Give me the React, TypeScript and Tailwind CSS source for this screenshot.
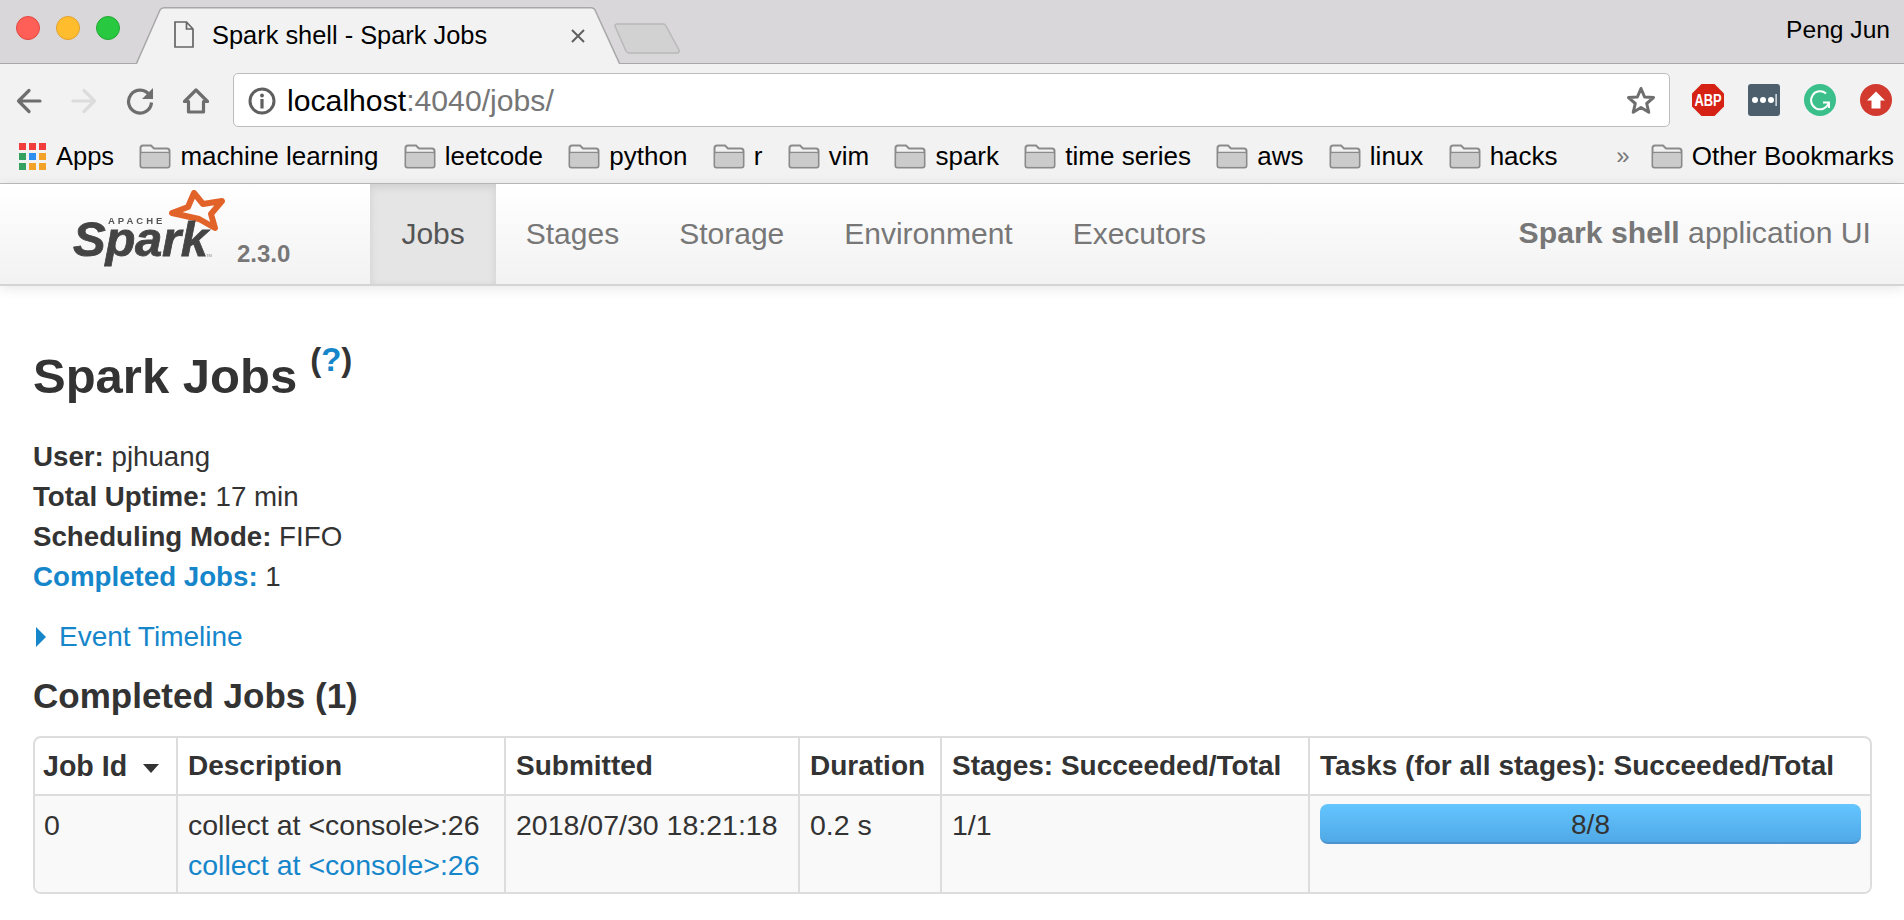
import React from "react"

const bookmarks = ["machine learning", "leetcode", "python", "r", "vim", "spark", "time series", "aws", "linux", "hacks"]

const navItems = ["Stages", "Storage", "Environment", "Executors"]

const headers = [
  "Description",
  "Submitted",
  "Duration",
  "Stages: Succeeded/Total",
  "Tasks (for all stages): Succeeded/Total",
]

function FolderIcon() {
  return (
    <svg width="32" height="25" viewBox="0 0 32 25" className="shrink-0">
      <path d="M1.5 4 Q1.5 1.5 4 1.5 H12 L15 4.5 H28 Q30.5 4.5 30.5 7 V21.5 Q30.5 23.5 28.5 23.5 H3.5 Q1.5 23.5 1.5 21.5 Z" fill="#f1f1f1" stroke="#8b8b8b" strokeWidth="2" />
      <path d="M2.5 9.5 H29.5 V22.5 H2.5 Z" fill="#cbcbcb" />
      <path d="M2 8.5 H30" stroke="#8b8b8b" strokeWidth="1.5" />
    </svg>
  )
}

function AppsIcon() {
  const colors = ["#f23d3d", "#f23d3d", "#f23d3d", "#34a15f", "#2f8ff0", "#f2a228", "#34a15f", "#f2a228", "#f2a228"]
  return (
    <svg width="27" height="27" viewBox="0 0 27 27" className="shrink-0">
      {colors.map((c, i) => (
        <rect key={i} x={(i % 3) * 10} y={Math.floor(i / 3) * 10} width="7" height="7" fill={c} />
      ))}
    </svg>
  )
}

function ArrowIcon({ flip, color }: { flip?: boolean; color: string }) {
  return (
    <svg width="26" height="26" viewBox="0 0 26 26" className={flip ? "shrink-0 rotate-180" : "shrink-0"}>
      <path d="M24 13 H2.5 M13 2.5 L2.5 13 L13 23.5" fill="none" stroke={color} strokeWidth="3.2" strokeLinecap="round" strokeLinejoin="round" />
    </svg>
  )
}

function SparkLogo() {
  return (
    <svg width="177" height="90" viewBox="0 0 177 90" className="shrink-0 blur-[0.6px]">
      <polygon points="134,9 143,20 162,17 151,30 155,44 139,35 112,29 128,23" fill="none" stroke="#e2632a" strokeWidth="6" strokeLinejoin="round" />
      <text x="48" y="40" fontFamily="Liberation Sans, sans-serif" fontWeight="700" fontSize="9.5" letterSpacing="3" fill="#555">APACHE</text>
      <text x="13" y="72" fontFamily="Liberation Sans, sans-serif" fontWeight="700" fontStyle="italic" fontSize="49" letterSpacing="-0.3" fill="#444" stroke="#444" strokeWidth="0.8">Spark</text>
      <text x="146" y="73" fontFamily="Liberation Sans, sans-serif" fontSize="4" fill="#888">TM</text>
    </svg>
  )
}

function BrowserChrome() {
  return (
    <div className="font-['Liberation_Sans',sans-serif] text-black">
      {/* tab strip */}
      <div className="flex h-[64px] items-start border-b-[1.5px] border-[#a8a8a8] bg-[#d9d7d9] pl-4">
        <div className="mt-4 flex gap-4">
          <div className="h-6 w-6 rounded-full border border-[#e2463f] bg-[#ff5f57]" />
          <div className="h-6 w-6 rounded-full border border-[#e1a02c] bg-[#ffbd2e]" />
          <div className="h-6 w-6 rounded-full border border-[#22a836] bg-[#28c940]" />
        </div>
        <div className="relative z-10 ml-4 mt-[7px] flex h-[57.5px] w-[484px] shrink-0 items-center">
          <svg width="484" height="58" viewBox="0 0 484 58" className="absolute inset-0">
            <path d="M0.5 57.5 L24 3 Q25.5 0.8 28 0.8 H455 Q458 0.8 459 3 L483.5 57.5 Z" fill="#f2f2f2" />
            <path d="M0.5 56.5 L24 3 Q25.5 0.8 28 0.8 H455 Q458 0.8 459 3 L483.5 56.5" fill="none" stroke="#a8a8a8" strokeWidth="1.5" />
          </svg>
          <svg width="20" height="27" viewBox="0 0 20 27" className="relative ml-[38px] mb-[2px] shrink-0">
            <path d="M1 1 H12.5 L19 8 V26 H1 Z M12.5 1 V8 H19" fill="none" stroke="#666" strokeWidth="1.7" />
          </svg>
          <span className="relative ml-[18px] whitespace-nowrap text-[25.4px] leading-none">Spark shell - Spark Jobs</span>
          <svg width="14" height="14" viewBox="0 0 14 14" className="relative ml-[84px] shrink-0">
            <path d="M1 1 L13 13 M13 1 L1 13" stroke="#5f5f5f" strokeWidth="2" />
          </svg>
        </div>
        <svg width="66" height="31" viewBox="0 0 66 31" className="-ml-[6px] mt-[23px] shrink-0">
          <path d="M1 3 Q1 1 3 1 H49 Q51 1 52 3 L65 27 Q65.5 30 63 30 H15 Q13 30 12 28 Z" fill="#d3d2d3" stroke="#b9b9b9" strokeWidth="1.5" />
        </svg>
        <span className="ml-auto mr-[14px] mt-[16px] text-[24.6px] leading-[28px]">Peng Jun</span>
      </div>

      {/* toolbar */}
      <div className="flex h-[72px] items-start bg-[#f2f2f2] pl-4 pr-3 pt-[9px]">
        <div className="mt-[15px] flex gap-[29px]">
          <ArrowIcon color="#6e6e6e" />
          <ArrowIcon flip color="#dcdcdc" />
          <svg width="28" height="28" viewBox="0 0 28 28" className="-mt-[1px] shrink-0">
            <path d="M23.5 8 A11.5 11.5 0 1 0 25.5 15.5" fill="none" stroke="#6e6e6e" strokeWidth="3.2" />
            <polygon points="27,1 27,12 16,12" fill="#6e6e6e" />
          </svg>
          <svg width="26" height="26" viewBox="0 0 26 26" className="shrink-0">
            <path d="M13 2 L24.5 13.5 H20.5 V24 H5.5 V13.5 H1.5 Z" fill="none" stroke="#6e6e6e" strokeWidth="3.2" strokeLinejoin="round" />
          </svg>
        </div>
        <div className="ml-[24px] flex h-[54px] flex-1 items-center rounded-[5px] border-[1.5px] border-[#bdbdbd] bg-white pl-[14px] pr-[13px]">
          <svg width="28" height="28" viewBox="0 0 28 28" className="mt-[1px] shrink-0">
            <circle cx="14" cy="14" r="12" fill="none" stroke="#5f5f5f" strokeWidth="3" />
            <circle cx="14" cy="8.5" r="1.9" fill="#5f5f5f" />
            <rect x="12.4" y="12" width="3.2" height="9.5" fill="#5f5f5f" />
          </svg>
          <span className="ml-[11px] pt-[3px] text-[30.2px] leading-none">
            localhost<span className="text-[#767676]">:4040/jobs/</span>
          </span>
          <svg width="30" height="29" viewBox="0 0 30 29" className="ml-auto shrink-0">
            <polygon points="15,2.5 18.6,11 27.5,11.6 20.7,17.5 22.8,26.3 15,21.5 7.2,26.3 9.3,17.5 2.5,11.6 11.4,11" fill="none" stroke="#6e6e6e" strokeWidth="3" strokeLinejoin="round" />
          </svg>
        </div>
        <div className="ml-[22px] mt-[11px] flex gap-6">
          <svg width="32" height="32" viewBox="0 0 32 32" className="shrink-0">
            <polygon points="9.5,0 22.5,0 32,9.5 32,22.5 22.5,32 9.5,32 0,22.5 0,9.5" fill="#d62115" />
            <text transform="translate(16 22) scale(0.76 1)" textAnchor="middle" fontFamily="Liberation Sans, sans-serif" fontWeight="700" fontSize="17" fill="#fff">ABP</text>
          </svg>
          <svg width="32" height="32" viewBox="0 0 32 32" className="shrink-0">
            <rect width="32" height="32" rx="3" fill="#4d5f6c" />
            <circle cx="7" cy="16" r="3" fill="#fff" />
            <circle cx="15" cy="16" r="3" fill="#fff" />
            <circle cx="23" cy="16" r="3" fill="#fff" />
            <rect x="27.5" y="10" width="1.2" height="12" fill="#fff" />
          </svg>
          <svg width="32" height="32" viewBox="0 0 32 32" className="shrink-0">
            <circle cx="16" cy="16" r="16" fill="#3bc08b" />
            <path d="M22 9.5 A9 9 0 1 0 24.5 19.5 M19 18.5 H25 V24" fill="none" stroke="#fff" strokeWidth="2" />
          </svg>
          <svg width="32" height="32" viewBox="0 0 32 32" className="shrink-0">
            <circle cx="16" cy="16" r="16" fill="#d2392f" />
            <polygon points="16,7.5 25,16.5 20.5,16.5 20.5,24.5 11.5,24.5 11.5,16.5 7,16.5" fill="#fff" />
          </svg>
        </div>
      </div>

      {/* bookmarks */}
      <div className="flex h-[48px] items-start justify-between border-b-[1.5px] border-[#bdbdbd] bg-[#f2f2f2] pl-[19px] pr-[10px] pt-[5px]">
        <div className="flex items-center gap-[25.3px]">
          <div className="flex items-center gap-[10px]">
            <AppsIcon />
            <span className="text-[25.5px] leading-[30px]">Apps</span>
          </div>
          {bookmarks.map((b) => (
            <div key={b} className="flex items-center gap-[9px]">
              <FolderIcon />
              <span className="whitespace-nowrap text-[26px] leading-[30px]">{b}</span>
            </div>
          ))}
        </div>
        <div className="flex items-center">
          <span className="mr-[21px] text-[24px] leading-[30px] text-[#777]">»</span>
          <div className="flex items-center gap-[9px]">
            <FolderIcon />
            <span className="whitespace-nowrap text-[26px] leading-[30px]">Other Bookmarks</span>
          </div>
        </div>
      </div>
    </div>
  )
}

function SparkNav() {
  return (
    <div className="relative flex h-[102px] items-stretch border-b-2 border-[#d4d4d4] bg-gradient-to-b from-white to-[#f2f2f2] shadow-[0_2px_12px_rgba(0,0,0,0.1)]">
      <div className="ml-[60px] flex items-start">
        <SparkLogo />
      </div>
      <span className="mt-[56px] self-start text-[24px] font-bold leading-[27px] text-[#777]">2.3.0</span>
      <div className="ml-[80px] flex items-center bg-[#e5e5e5] px-[31px] pb-[2px] text-[30px] text-[#555] shadow-[inset_0_3px_8px_rgba(0,0,0,0.1)]">
        Jobs
      </div>
      {navItems.map((n) => (
        <div key={n} className="flex items-center px-[30px] pb-[2px] text-[30px] text-[#777]">
          {n}
        </div>
      ))}
      <div className="ml-auto flex items-center pb-[2px] pr-[33px] text-[30.2px] text-[#777]">
        <span>
          <strong className="font-bold">Spark shell</strong> application UI
        </span>
      </div>
    </div>
  )
}

function JobsTable() {
  return (
    <div className="overflow-hidden rounded-lg border-2 border-[#ddd]">
      <table className="w-full table-fixed border-separate border-spacing-0 text-left text-[28px] leading-[40px]">
        <colgroup>
          <col className="w-[141px]" />
          <col className="w-[328px]" />
          <col className="w-[294px]" />
          <col className="w-[142px]" />
          <col className="w-[368px]" />
          <col className="w-[562px]" />
        </colgroup>
        <thead>
          <tr className="h-[58px]">
            <th className="border-b-2 border-[#ddd] px-[8px] font-bold">
              <span className="flex items-center gap-[16px]">
                <span className="text-[28.6px]">Job Id</span>
                <svg width="16" height="9" viewBox="0 0 16 9" className="mt-1 shrink-0">
                  <polygon points="0,0 16,0 8,9" fill="#333" />
                </svg>
              </span>
            </th>
            {headers.map((h) => (
              <th key={h} className="whitespace-nowrap border-b-2 border-l-2 border-[#ddd] px-[10px] font-bold">
                {h}
              </th>
            ))}
          </tr>
        </thead>
        <tbody>
          <tr className="h-[96px] bg-[#f9f9f9] align-top text-[28.5px]">
            <td className="px-[9px] pb-[7px] pt-[9px]">0</td>
            <td className="whitespace-nowrap border-l-2 border-[#ddd] px-[10px] pb-[7px] pt-[9px]">
              <div>{"collect at <console>:26"}</div>
              <a className="text-[#1686cb]">{"collect at <console>:26"}</a>
            </td>
            <td className="whitespace-nowrap border-l-2 border-[#ddd] px-[10px] pb-[7px] pt-[9px]">2018/07/30 18:21:18</td>
            <td className="border-l-2 border-[#ddd] px-[10px] pb-[7px] pt-[9px]">0.2 s</td>
            <td className="border-l-2 border-[#ddd] px-[10px] pb-[7px] pt-[9px]">1/1</td>
            <td className="border-l-2 border-[#ddd] pl-[10px] pr-[9px] pb-[7px] pt-2">
              <div className="h-10 rounded-lg border-b-2 border-[#4b94cf] bg-gradient-to-b from-[#64c5ff] to-[#50a9e6] text-center text-[28px] leading-[42px]">
                8/8
              </div>
            </td>
          </tr>
        </tbody>
      </table>
    </div>
  )
}

export default function App() {
  return (
    <div className="h-[920px] overflow-hidden bg-white font-['Liberation_Sans',sans-serif] text-[#333]">
      <BrowserChrome />
      <SparkNav />
      <div className="pl-[33px] pr-[32px]">
        <h3 className="mt-[63px] flex h-[54px] items-start text-[49px] font-bold leading-[54px]">
          Spark Jobs
          <span className="ml-[13px] -mt-[9px] text-[33px] leading-[40px]">
            (<a className="text-[#1686cb]">?</a>)
          </span>
        </h3>
        <ul className="mt-[34px] text-[27.7px] leading-[40px]">
          <li>
            <strong>User:</strong> pjhuang
          </li>
          <li>
            <strong>Total Uptime:</strong> 17 min
          </li>
          <li>
            <strong>Scheduling Mode:</strong> FIFO
          </li>
          <li>
            <a className="font-bold text-[#1686cb]">Completed Jobs:</a> 1
          </li>
        </ul>
        <div className="mt-5 flex h-10 items-center text-[28px] text-[#1686cb]">
          <svg width="10" height="20" viewBox="0 0 10 20" className="ml-[3px] shrink-0">
            <polygon points="0,0 10,10 0,20" fill="#1686cb" />
          </svg>
          <span className="ml-[13px]">Event Timeline</span>
        </div>
        <h4 className="mt-[20px] text-[35px] font-bold leading-[38px]">Completed Jobs (1)</h4>
        <div className="mt-[21px]">
          <JobsTable />
        </div>
      </div>
    </div>
  )
}
